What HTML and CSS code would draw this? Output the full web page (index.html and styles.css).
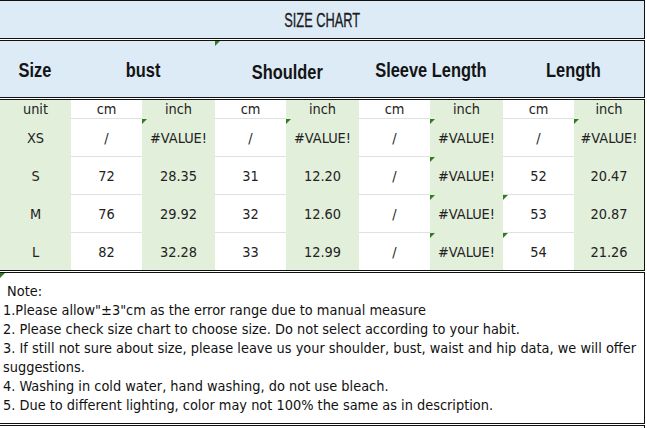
FILE: index.html
```html
<!DOCTYPE html>
<html>
<head>
<meta charset="utf-8">
<link rel="stylesheet" href="styles.css">
</head>
<body>
<div class="sheet">
  <div class="box title-box"><span class="title">SIZE CHART</span></div>
  <div class="box header-box">
    <div class="hcell"><span class="hlabel">Size</span></div>
    <div class="hcell"><span class="hlabel">bust</span></div>
    <div class="hcell mark shoulder"><span class="hlabel">Shoulder</span></div>
    <div class="hcell"><span class="hlabel">Sleeve Length</span></div>
    <div class="hcell"><span class="hlabel">Length</span></div>
  </div>
  <div class="box table">
    <div class="c g u">unit</div><div class="c w u">cm</div><div class="c g u">inch</div><div class="c w u">cm</div><div class="c g u">inch</div><div class="c w u">cm</div><div class="c g u">inch</div><div class="c w u">cm</div><div class="c g u">inch</div>

    <div class="c g">XS</div><div class="c w">/</div><div class="c g mark">#VALUE!</div><div class="c w">/</div><div class="c g mark">#VALUE!</div><div class="c w">/</div><div class="c g mark">#VALUE!</div><div class="c w">/</div><div class="c g mark">#VALUE!</div>

    <div class="c g">S</div><div class="c w">72</div><div class="c g">28.35</div><div class="c w">31</div><div class="c g">12.20</div><div class="c w">/</div><div class="c g mark">#VALUE!</div><div class="c w">52</div><div class="c g">20.47</div>

    <div class="c g">M</div><div class="c w">76</div><div class="c g">29.92</div><div class="c w">32</div><div class="c g">12.60</div><div class="c w">/</div><div class="c g mark">#VALUE!</div><div class="c w mark">53</div><div class="c g">20.87</div>

    <div class="c g last">L</div><div class="c w last">82</div><div class="c g last">32.28</div><div class="c w last">33</div><div class="c g last">12.99</div><div class="c w last">/</div><div class="c g last mark">#VALUE!</div><div class="c w last mark">54</div><div class="c g last">21.26</div>
  </div>
  <div class="box note mark">
    <p>&nbsp;Note:</p>
    <p>1.Please allow"±3"cm as the error range due to manual measure</p>
    <p>2. Please check size chart to choose size. Do not select according to your habit.</p>
    <p>3. If still not sure about size, please leave us your shoulder, bust, waist and hip data, we will offer suggestions.</p>
    <p>4. Washing in cold water, hand washing, do not use bleach.</p>
    <p>5. Due to different lighting, color may not 100% the same as in description.</p>
  </div>
  <div class="box tail"></div>
</div>
</body>
</html>
```

FILE: styles.css
```css
html, body {
  margin: 0;
  padding: 0;
  background: #ffffff;
  overflow: hidden;
}

.sheet {
  width: 645px;
  display: flex;
  flex-direction: column;
  gap: 1px;
}

.box {
  border: 1px solid #111111;
  border-left: none;
  box-sizing: border-box;
  position: relative;
}

.title-box {
  height: 39px;
  background: #ddebf7;
  display: flex;
  align-items: center;
  justify-content: center;
}

.title {
  display: inline-block;
  white-space: nowrap;
  font-family: "Liberation Sans", Arial, sans-serif;
  font-size: 21px;
  color: #1a1a1a;
  transform: scaleX(0.61);
  padding-top: 1px;
  -webkit-text-stroke: 0.3px #1a1a1a;
}

.header-box {
  height: 58px;
  background: #ddebf7;
  display: grid;
  grid-template-columns: 71px 144px 144px 144px 141px;
}

.hcell {
  display: flex;
  align-items: center;
  justify-content: center;
  padding-top: 3px;
  position: relative;
}

.hlabel {
  display: inline-block;
  white-space: nowrap;
  font-family: "Liberation Sans", Arial, sans-serif;
  font-weight: bold;
  font-size: 20px;
  color: #141414;
  transform: scaleX(0.82);
}

.hcell.shoulder {
  padding-top: 6px;
}

.table {
  height: 172px;
  display: grid;
  grid-template-columns: 71px 71px 73px 71px 73px 71px 73px 71px 70px;
  grid-template-rows: 19px 38px 38px 38px 37px;
}

.c {
  position: relative;
  display: flex;
  align-items: center;
  justify-content: center;
  font-family: "DejaVu Sans Condensed", "DejaVu Sans", sans-serif;
  font-stretch: semi-condensed;
  font-size: 14.4px;
  color: #222222;
  border-bottom: 1px solid transparent;
}

.c.g {
  background: #e2efda;
  border-bottom-color: #e2efda;
}

.c.w {
  background: #ffffff;
  border-bottom-color: #e1e1e1;
}

.c.last {
  border-bottom: none;
}

.c.u {
  line-height: 18px;
}

.mark::before {
  content: "";
  position: absolute;
  left: 0;
  top: 0;
  width: 0;
  height: 0;
  border-top: 5px solid #2e7d1e;
  border-right: 5px solid transparent;
}

.note {
  height: 152px;
  padding: 9px 0 0 3px;
  font-family: "DejaVu Sans Condensed", "DejaVu Sans", sans-serif;
  font-stretch: semi-condensed;
  font-size: 14.4px;
  line-height: 19px;
  color: #111111;
}

.note p {
  margin: 0;
}

.tail {
  height: 10px;
  border-bottom: none;
}
```
